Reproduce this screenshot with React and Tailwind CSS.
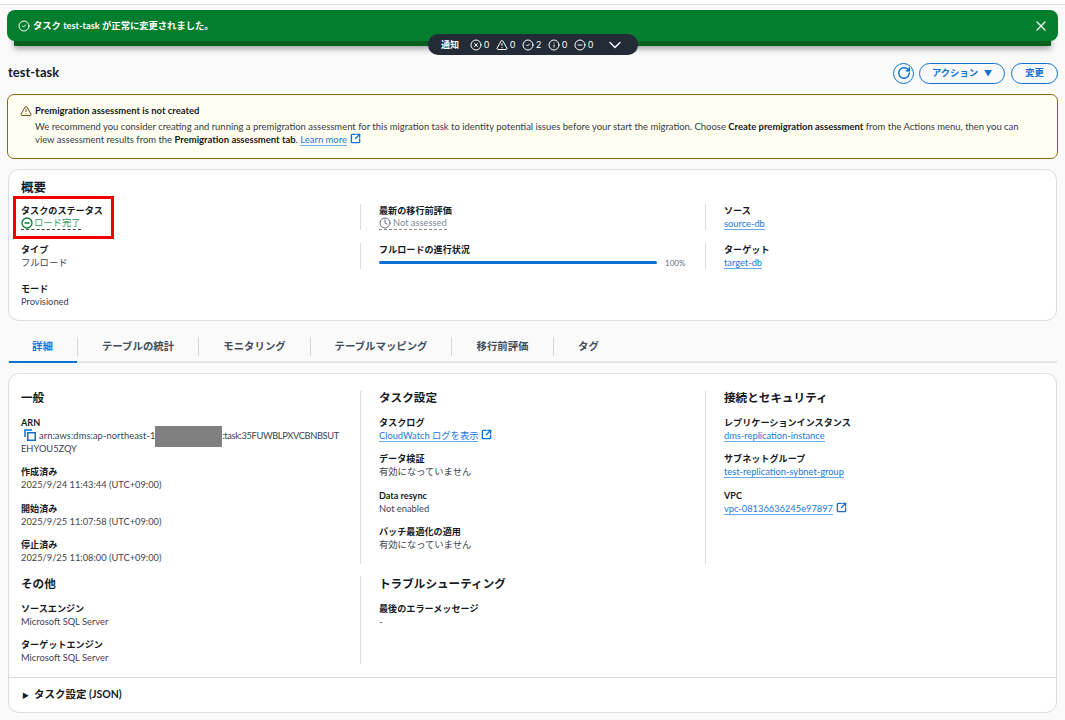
import React from "react";
import { CircleCheck, CircleX, TriangleAlert, Info, CircleMinus, ChevronDown, X, RotateCw, SquareArrowOutUpRight, Clock } from "lucide-react";

const Label = ({ children }) => <div className="h-[13px] leading-[13px] text-[9.1px] font-bold text-[#16191f] whitespace-nowrap">{children}</div>;
const Value = ({ children }) => <div className="leading-[13px] text-[9.3px] text-[#3b4450] whitespace-nowrap">{children}</div>;
const A = ({ children }) => <span className="text-[#1a78dc] border-b border-[#6aa9ec] leading-[11px] inline-block">{children}</span>;
const Ext = () => <SquareArrowOutUpRight className="inline-block w-[11px] h-[11px] ml-[3px] text-[#0972d3] align-[-1px]" strokeWidth={3} />;
const Field = ({ label, children }) => (
  <div>
    <Label>{label}</Label>
    <Value>{children}</Value>
  </div>
);
const H = ({ children }) => <h2 className="text-[11.6px] leading-[14px] font-bold text-[#16191f] mb-[11px] whitespace-nowrap">{children}</h2>;
const Fields = ({ children }) => <div className="flex flex-col gap-[10.3px]">{children}</div>;

const tabs = [
  ["詳細", "w-[69px]", true],
  ["テーブルの統計", "w-[121px]"],
  ["モニタリング", "w-[112px]"],
  ["テーブルマッピング", "w-[141px]"],
  ["移行前評価", "w-[102px]"],
  ["タグ", "w-[70px]"],
];

const Count = ({ Icon, n }) => (
  <span className="flex items-center gap-[2px] w-[26px]">
    <Icon className="w-[12px] h-[12px] text-white" strokeWidth={2} />
    <span className="text-[9px] leading-none">{n}</span>
  </span>
);

export default function App() {
  return (
    <div className="relative h-[720px] w-[1065px] overflow-hidden bg-[#fafafa] font-['Lato','Noto_Sans_CJK_JP',sans-serif]">
      <div className="h-[5px] bg-white border-b border-[#e6e6e6]" />

      <div className="relative mx-[7px] mt-[5px] h-[31px] rounded-[8px] bg-[#037e2e] shadow-[0_12px_0_-7px_#03601f,0_15px_6px_-7px_rgba(0,0,0,0.35)] flex items-center pl-[11px] pr-[9px] text-white">
        <CircleCheck className="w-[12px] h-[12px] mr-[3px]" strokeWidth={2} />
        <span className="text-[9.3px] font-bold">タスク test-task が正常に変更されました。</span>
        <X className="ml-auto w-[16px] h-[16px]" strokeWidth={1.8} />
        <div className="absolute left-[421px] top-[24px] w-[210px] h-[21px] rounded-[10px] bg-[#232b37] flex items-center pl-[13px] text-white">
          <span className="text-[9px] font-bold w-[29px]">通知</span>
          <Count Icon={CircleX} n="0" />
          <Count Icon={TriangleAlert} n="0" />
          <Count Icon={CircleCheck} n="2" />
          <Count Icon={Info} n="0" />
          <Count Icon={CircleMinus} n="0" />
          <ChevronDown className="ml-[5px] w-[20px] h-[20px]" strokeWidth={1.6} />
        </div>
      </div>

      <div className="mx-[7px] mt-[22px] h-[20px] flex items-center justify-between">
        <h1 className="pl-[1px] text-[13px] font-bold text-[#16191f]">test-task</h1>
        <div className="flex items-center">
          <button className="w-[21px] h-[21px] rounded-full border-[1.5px] border-[#0972d3] flex items-center justify-center text-[#0972d3]">
            <RotateCw className="w-[14px] h-[14px]" strokeWidth={2.5} />
          </button>
          <button className="ml-[5px] w-[86px] h-[21px] rounded-[11px] border-[1.5px] border-[#0972d3] text-[#0972d3] text-[9.3px] font-bold flex items-center justify-center gap-[6px]">
            アクション <span className="text-[8px]">▼</span>
          </button>
          <button className="ml-[6px] w-[47px] h-[21px] rounded-[11px] border-[1.5px] border-[#0972d3] text-[#0972d3] text-[9.3px] font-bold">変更</button>
        </div>
      </div>

      <div className="mx-[7px] mt-[11px] h-[65px] rounded-[7px] border border-[#8d6605] bg-[#fffef0] pl-[12px] pt-[9px] flex">
        <TriangleAlert className="w-[12px] h-[12px] mt-[1px] mr-[3px] text-[#5f4a10] shrink-0" strokeWidth={2} />
        <div className="text-[9.46px] leading-[13px] text-[#333b46]">
          <div className="font-bold text-[#16191f] mb-[3px]">Premigration assessment is not created</div>
          <div className="w-[1000px]">
            We recommend you consider creating and running a premigration assessment for this migration task to identity potential issues before your start the migration. Choose <b className="text-[#16191f]">Create premigration assessment</b> from the Actions menu, then you can<br />view assessment results from the <b className="text-[#16191f]">Premigration assessment tab</b>. <A>Learn more</A>
            <Ext />
          </div>
        </div>
      </div>

      <section className="relative mx-[8px] mt-[10px] h-[152px] rounded-[11px] border border-[#dcdde1] bg-white pl-[12px] pt-[10px]">
        <h2 className="text-[12.5px] leading-[16px] font-bold text-[#16191f] mb-[8px]">概要</h2>
        <div className="grid grid-cols-[339px_345px_1fr] auto-rows-[26px] gap-y-[13px]">
          <Field label="タスクのステータス">
            <span className="inline-flex items-center gap-[1px] text-[#2f9f5f] border-b border-dashed border-[#444] leading-[12px]">
              <CircleMinus className="w-[12px] h-[12px] text-[#037f3c]" strokeWidth={2.6} />ロード完了
            </span>
          </Field>
          <div className="border-l border-[#dcdde1] pl-[18px]">
            <Label>最新の移行前評価</Label>
            <Value>
              <span className="inline-flex items-center gap-[2px] text-[#7d8998] border-b border-dashed border-[#888] leading-[12px]">
                <Clock className="w-[12px] h-[12px] text-[#5f6b7a]" strokeWidth={2} />Not assessed
              </span>
            </Value>
          </div>
          <div className="border-l border-[#dcdde1] pl-[18px]">
            <Field label="ソース"><A>source-db</A></Field>
          </div>
          <Field label="タイプ">フルロード</Field>
          <div className="border-l border-[#dcdde1] pl-[18px]">
            <Label>フルロードの進行状況</Label>
            <div className="flex items-center h-[13px]">
              <div className="w-[278px] h-[2.5px] rounded-full bg-[#0972d3]" />
              <span className="ml-[8px] text-[8px] text-[#5f6b7a]">100%</span>
            </div>
          </div>
          <div className="border-l border-[#dcdde1] pl-[18px]">
            <Field label="ターゲット"><A>target-db</A></Field>
          </div>
          <Field label="モード">Provisioned</Field>
        </div>
      </section>

      <div className="relative mx-[8px] mt-[14px] h-[28px] border-b-2 border-[#e4e4e6] flex items-start pt-[2px]">
        {tabs.map(([t, w, active], i) => (
          <div key={t} className={`${w} h-[19px] flex items-center justify-center text-[10.4px] font-bold whitespace-nowrap ${active ? "text-[#1a78dc]" : "text-[#414d5c]"} ${i > 0 ? "border-l border-[#d5dbdb]" : ""}`}>
            {t}
          </div>
        ))}
        <div className="absolute left-[1px] bottom-[-2px] w-[68px] h-[2px] bg-[#0972d3]" />
      </div>

      <section className="relative mx-[8px] mt-[10px] h-[340px] rounded-[11px] border border-[#dcdde1] bg-white">
        <div className="h-[303px] pt-[17px]">
          <div className="grid grid-cols-[339px_345px_1fr] pl-[12px]">
            <div className="h-[173px]">
              <H>一般</H>
              <Fields>
                <Field label="ARN">
                  <svg className="inline-block w-[12px] h-[12px] ml-[3px] mr-[3px] align-[-2px]" viewBox="0 0 12 12" fill="none" stroke="#0972d3" strokeWidth="1.5">
                    <path d="M1 8V1h7" />
                    <rect x="3.75" y="3.75" width="7.5" height="7.5" />
                  </svg>
                  <span className="tracking-[0.08px]">arn:aws:dms:ap-northeast-1</span>
                  <span className="relative inline-block w-[67px] h-[13px] align-top">
                    <span className="absolute left-0 top-[-3px] w-[67px] h-[21px] bg-[#808080]" />
                  </span>
                  <span className="tracking-[-0.37px]">:task:35FUWBLPXVCBNBSUT</span>
                  <br />
                  EHYOU5ZQY
                </Field>
                <Field label="作成済み">2025/9/24 11:43:44 (UTC+09:00)</Field>
                <Field label="開始済み">2025/9/25 11:07:58 (UTC+09:00)</Field>
                <Field label="停止済み">2025/9/25 11:08:00 (UTC+09:00)</Field>
              </Fields>
            </div>
            <div className="h-[173px] border-l border-[#dcdde1] pl-[18px]">
              <H>タスク設定</H>
              <Fields>
                <Field label="タスクログ"><A>CloudWatch ログを表示</A><Ext /></Field>
                <Field label="データ検証">有効になっていません</Field>
                <Field label="Data resync">Not enabled</Field>
                <Field label="バッチ最適化の適用">有効になっていません</Field>
              </Fields>
            </div>
            <div className="h-[173px] border-l border-[#dcdde1] pl-[18px]">
              <H>接続とセキュリティ</H>
              <Fields>
                <Field label="レプリケーションインスタンス"><A>dms-replication-instance</A></Field>
                <Field label="サブネットグループ"><A>test-replication-sybnet-group</A></Field>
                <Field label="VPC"><A>vpc-08136636245e97897</A><Ext /></Field>
              </Fields>
            </div>
          </div>
          <div className="grid grid-cols-[339px_345px_1fr] pl-[12px] mt-[12px]">
            <div className="h-[88px] pt-[1px]">
              <H>その他</H>
              <Fields>
                <Field label="ソースエンジン">Microsoft SQL Server</Field>
                <Field label="ターゲットエンジン">Microsoft SQL Server</Field>
              </Fields>
            </div>
            <div className="h-[88px] pt-[1px] border-l border-[#dcdde1] pl-[18px]">
              <H>トラブルシューティング</H>
              <Fields>
                <Field label="最後のエラーメッセージ">-</Field>
              </Fields>
            </div>
          </div>
        </div>
        <div className="h-[35px] border-t border-[#dcdde1] flex items-center pl-[13px] text-[10.5px] font-bold text-[#16191f]">
          <span className="text-[7px] mr-[5px]">▶</span>タスク設定 (JSON)
        </div>
      </section>

      <div className="absolute left-[13px] top-[196px] w-[101px] h-[43px] border-[3px] border-[#f00000]" />
    </div>
  );
}
